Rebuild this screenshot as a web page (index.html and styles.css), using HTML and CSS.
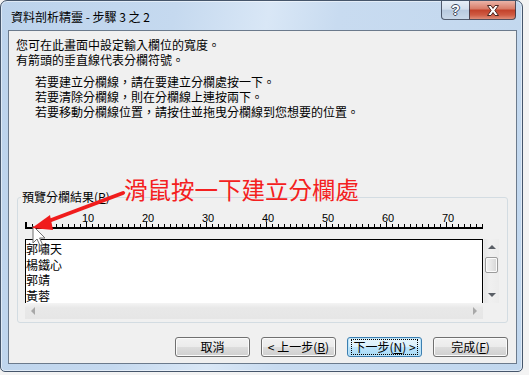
FILE: index.html
```html
<!DOCTYPE html>
<html lang="zh-Hant">
<head>
<meta charset="utf-8">
<title>資料剖析精靈</title>
<link rel="stylesheet" href="styles.css">
</head>
<body>
<div class="window">
  <div class="titlebar">
    <div class="title">資料剖析精靈 - 步驟 3 之 2</div>
    <div class="caption">
      <div class="cbtn help"><span class="qmark">?</span></div>
      <div class="cbtn close">
        <svg width="14" height="11" viewBox="0 0 14 11"><path d="M1.5,0.5 H5 L7,3.4 L9,0.5 H12.5 L8.9,5.5 L12.5,10.5 H9 L7,7.6 L5,10.5 H1.5 L5.1,5.5 Z" fill="#fff" stroke="#4a2620" stroke-width="1" stroke-linejoin="round"/></svg>
      </div>
    </div>
  </div>
  <div class="client">
    <div class="intro">
      <div class="ln">您可在此畫面中設定輸入欄位的寬度。</div>
      <div class="ln">有箭頭的垂直線代表分欄符號。</div>
    </div>
    <div class="steps">
      <div class="ln">若要建立分欄線，請在要建立分欄處按一下。</div>
      <div class="ln">若要清除分欄線，則在分欄線上連按兩下。</div>
      <div class="ln">若要移動分欄線位置，請按住並拖曳分欄線到您想要的位置。</div>
    </div>
    <fieldset class="group">
      <legend>預覽分欄結果(<u>P</u>)</legend>
      <div class="group-body">
        <svg class="ruler" width="474" height="35" viewBox="0 0 474 35">
          <defs>
            <pattern id="tk" x="1" y="0" width="6" height="35" patternUnits="userSpaceOnUse">
              <rect x="0" y="20" width="1" height="3" fill="#000"/>
            </pattern>
          </defs>
          <rect x="0" y="20" width="459" height="3" fill="url(#tk)"/>
          <rect x="0" y="23" width="458" height="2" fill="#000"/>
          <rect x="0" y="18" width="2" height="5" fill="#000"/>
          <rect x="61" y="18" width="1" height="5" fill="#000"/>
          <rect x="121" y="18" width="1" height="5" fill="#000"/>
          <rect x="181" y="18" width="1" height="5" fill="#000"/>
          <rect x="241" y="18" width="1" height="5" fill="#000"/>
          <rect x="301" y="18" width="1" height="5" fill="#000"/>
          <rect x="361" y="18" width="1" height="5" fill="#000"/>
          <rect x="421" y="18" width="1" height="5" fill="#000"/>
          <g class="rnum">
            <text x="57" y="18">10</text>
            <text x="117" y="18">20</text>
            <text x="177" y="18">30</text>
            <text x="237" y="18">40</text>
            <text x="297" y="18">50</text>
            <text x="357" y="18">60</text>
            <text x="417" y="18">70</text>
          </g>
        </svg>
        <div class="preview">
          <div class="pmain">
            <div class="grid">
              <div>郭嘯天</div>
              <div>楊鐵心</div>
              <div>郭靖</div>
              <div>黃蓉</div>
            </div>
            <div class="hscroll">
              <span class="arr-left"></span>
              <span class="arr-right"></span>
            </div>
          </div>
          <div class="vscroll">
            <div class="vbtn"><span class="arr-up"></span></div>
            <div class="thumb"></div>
            <div class="vspace"></div>
            <div class="vbtn"><span class="arr-down"></span></div>
          </div>
        </div>
      </div>
    </fieldset>
    <div class="buttons">
      <div class="btn">取消</div>
      <div class="btn">&lt; 上一步(<u>B</u>)</div>
      <div class="btn default"><span class="focus">下一步(<u>N</u>) &gt;</span></div>
      <div class="btn">完成(<u>F</u>)</div>
    </div>
  </div>
</div>

<svg class="annot-svg" width="529" height="375" viewBox="0 0 529 375">
  <path transform="translate(33,226)" d="M0,0 L0,17 L4,13 L7,19.5 L9.5,18.5 L6.6,12 L12,12 Z" fill="#fff" stroke="#707070" stroke-width="1" stroke-linejoin="round"/>
  <line x1="123" y1="193" x2="46" y2="222" stroke="#f01c1c" stroke-width="4" stroke-linecap="round"/>
  <polygon points="32,228 50,215 53,230" fill="#f01c1c"/>
</svg>
<div class="annot-text">滑鼠按一下建立分欄處</div>
</body>
</html>
```

FILE: styles.css
```css
* {
  box-sizing: border-box;
}

html, body {
  margin: 0;
  padding: 0;
}

body {
  width: 529px;
  height: 375px;
  overflow: hidden;
  position: relative;
  background: #f3f3f3;
  font-family: "Noto Sans CJK TC", "Noto Sans", sans-serif;
  font-size: 12px;
  color: #000;
}

.window {
  width: 523px;
  height: 372px;
  border: 1px solid #46566b;
  border-radius: 7px 7px 5px 5px;
  background: linear-gradient(100deg, #bcd3ec 0%, #c5d9ef 30%, #d9e7f6 46%, #c8dbf0 58%, #c1d7ee 100%);
  box-shadow: inset 0 0 0 1px rgba(255, 255, 255, 0.5);
}

.titlebar {
  height: 29px;
  display: flex;
  align-items: center;
  padding-left: 10px;
}

.title {
  flex: 1;
  font-size: 12px;
  line-height: 14px;
  margin-top: 2px;
  white-space: nowrap;
}

.caption {
  align-self: flex-start;
  display: flex;
  margin-right: 6px;
}

.cbtn {
  height: 19px;
  display: flex;
  align-items: center;
  justify-content: center;
  border: 1px solid rgba(45, 55, 75, 0.8);
  border-top: none;
}

.help {
  width: 28px;
  border-right: none;
  border-radius: 0 0 0 4px;
  background: linear-gradient(#e7eff8 0%, #d3dfed 45%, #b8cadf 52%, #c9d8e9 100%);
}

.qmark {
  font-family: "Liberation Sans", sans-serif;
  font-weight: bold;
  font-size: 14px;
  line-height: 14px;
  color: #fff;
  text-shadow: 1px 0 0 #3d4b5e, -1px 0 0 #3d4b5e, 0 1px 0 #3d4b5e, 0 -1px 0 #3d4b5e;
}

.close {
  width: 47px;
  border-radius: 0 0 4px 0;
  background: linear-gradient(#ebb4a8 0%, #d97e6a 42%, #c3432c 52%, #cf5b43 78%, #df8e79 100%);
}

.close svg {
  display: block;
}

.client {
  margin-left: 7px;
  width: 509px;
  height: 334px;
  border: 1px solid #6b7a8c;
  background: #f0f0f0;
  padding-top: 6px;
}

.intro {
  padding-left: 7px;
}

.steps {
  margin-top: 7px;
  padding-left: 26px;
}

.ln {
  height: 15px;
  line-height: 15px;
  white-space: nowrap;
}

.group {
  margin: 71px 8px 0 8px;
  padding: 0;
  min-width: 0;
  border: 1px solid #d3dce2;
  border-radius: 3px;
}

.group legend {
  margin-left: 3px;
  padding: 0 1px;
  line-height: 14px;
  font-size: 12px;
}

.group-body {
  padding: 0 8px 3px 7px;
}

.ruler {
  display: block;
}

.rnum text {
  font-family: "Liberation Sans", sans-serif;
  font-size: 11px;
  fill: #000;
}

.preview {
  display: flex;
  gap: 1px;
  height: 80px;
}

.pmain {
  width: 458px;
  display: flex;
  flex-direction: column;
}

.grid {
  height: 64px;
  background: #fff;
  border: 1px solid #000;
  border-bottom: none;
  padding-top: 1px;
  line-height: 15.7px;
}

.hscroll {
  height: 16px;
  background: linear-gradient(#f4f4f4, #e8e8e8 30%, #e6e6e6);
  display: flex;
  justify-content: space-between;
  align-items: center;
  padding: 0 6px;
}

.arr-left {
  width: 0;
  height: 0;
  border-top: 4px solid transparent;
  border-bottom: 4px solid transparent;
  border-right: 4px solid #a8a8a8;
}

.arr-right {
  width: 0;
  height: 0;
  border-top: 4px solid transparent;
  border-bottom: 4px solid transparent;
  border-left: 4px solid #a8a8a8;
}

.vscroll {
  width: 15px;
  height: 64px;
  background: linear-gradient(90deg, #e6e6e6, #f0f0f0 40%, #ececec);
  display: flex;
  flex-direction: column;
}

.vbtn {
  height: 16px;
  display: flex;
  align-items: center;
  justify-content: center;
}

.arr-up {
  width: 0;
  height: 0;
  border-left: 4px solid transparent;
  border-right: 4px solid transparent;
  border-bottom: 4px solid #5a5f66;
}

.arr-down {
  width: 0;
  height: 0;
  border-left: 4px solid transparent;
  border-right: 4px solid transparent;
  border-top: 4px solid #5a5f66;
}

.thumb {
  margin: 2px 1px 0 1px;
  height: 16px;
  border: 1px solid #9b9b9b;
  border-radius: 2px;
  background: linear-gradient(90deg, #f4f4f4, #e6e6e6 50%, #d6d6d6);
  box-shadow: inset 0 0 0 1px #fbfbfb;
}

.vspace {
  flex: 1;
}

.buttons {
  display: flex;
  justify-content: flex-end;
  gap: 11px;
  margin: 14px 8px 0 0;
}

.btn {
  width: 75px;
  height: 20px;
  display: flex;
  align-items: center;
  justify-content: center;
  border: 1px solid #707070;
  border-radius: 3px;
  background: linear-gradient(#f2f2f2 0%, #ebebeb 50%, #dddddd 50%, #cfcfcf 100%);
  box-shadow: inset 0 0 0 1px #fbfbfb;
  line-height: 14px;
  white-space: nowrap;
}

.btn.default {
  border-color: #3c7fb1;
  background: linear-gradient(#eaf6fd 0%, #d9f0fc 50%, #bee6fd 50%, #a7d9f5 100%);
  box-shadow: inset 0 0 0 1px #bde4f9;
}

.focus {
  outline: 1px dotted #000;
  padding: 0 1px;
}

.annot-svg {
  position: absolute;
  left: 0;
  top: 0;
  pointer-events: none;
}

.annot-text {
  position: absolute;
  left: 124px;
  top: 177px;
  font-size: 23.5px;
  line-height: 24px;
  color: #f42020;
  white-space: nowrap;
  pointer-events: none;
}
```
